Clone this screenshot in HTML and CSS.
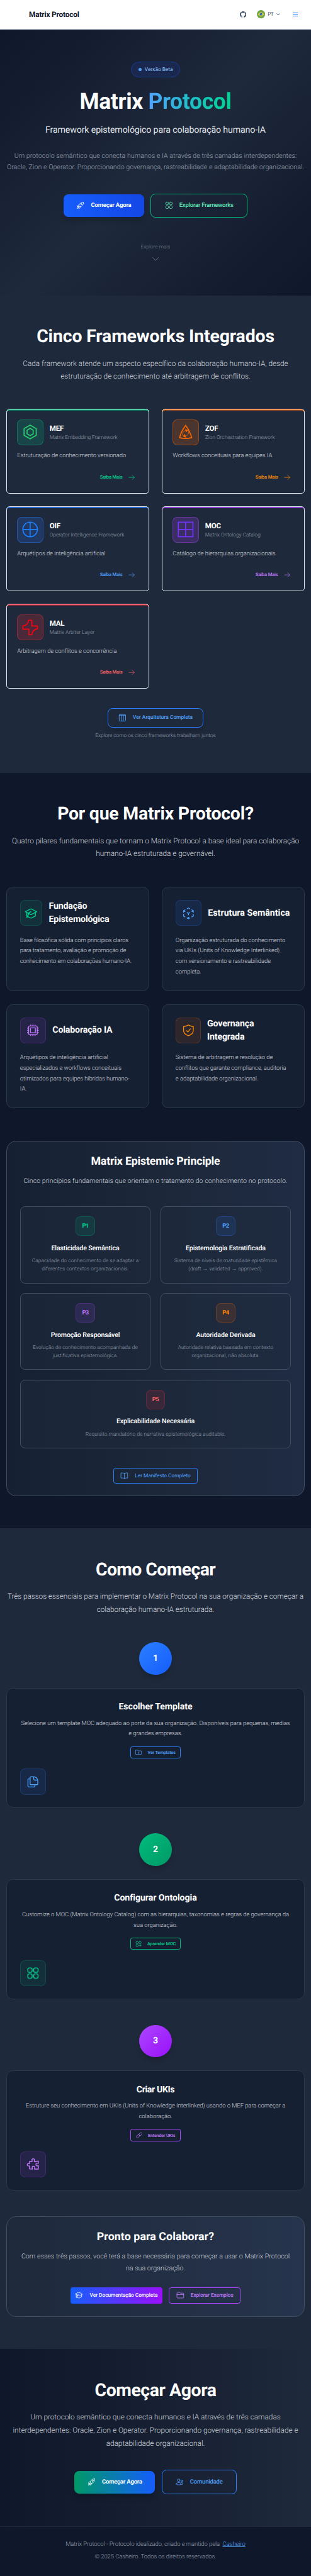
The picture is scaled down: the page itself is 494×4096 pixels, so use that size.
FILE: index.html
```html
<!DOCTYPE html>
<html lang="pt-BR">
<head>
<meta charset="utf-8">
<title>Matrix Protocol</title>
<link rel="stylesheet" href="styles.css">
</head>
<body>
<svg class="sprite" aria-hidden="true">
  <symbol id="rocket" viewBox="0 0 24 24"><path d="M8 13c1-5 5-10 13.5-10.500C22 11 17 15 11.500 16.500zM8.500 11.500c-3-.5-5 1-5.500 5 1.500-.8 3-.7 4.500-.2M12.500 15.500c.5 3-1 5-5 5.700.8-1.500.7-3 .2-4.600M6 16.500c-2.500.5-3.200 2.500-3.500 5 2.500-.2 4.500-1 5-3.500"/><circle cx="15.500" cy="8.500" r="2"/></symbol>
  <symbol id="widgets" viewBox="0 0 24 24"><rect x="2.500" y="2.500" width="8" height="8" rx="2.600"/><rect x="13.500" y="2.500" width="8" height="8" rx="2.600"/><rect x="2.500" y="13.500" width="8" height="8" rx="2.600"/><rect x="13.500" y="13.500" width="8" height="8" rx="2.600"/></symbol>
  <symbol id="widget-add" viewBox="0 0 24 24"><rect x="2.500" y="2.500" width="8" height="8" rx="3"/><rect x="13.500" y="2.500" width="8" height="8" rx="3"/><rect x="2.500" y="13.500" width="8" height="8" rx="3"/><path d="M17.500 12v10M13 17h9"/></symbol>
  <symbol id="arrow" viewBox="0 0 24 24"><path d="M2 12h20M14 4l8 8-8 8"/></symbol>
  <symbol id="down" viewBox="0 0 24 24"><path d="M2 6l10 11L22 6"/></symbol>
  <symbol id="columns" viewBox="0 0 24 24"><rect x="2.500" y="2.500" width="19" height="19" rx="1.500"/><path d="M2.500 5h19M9 5v16M15 5v16"/></symbol>
  <symbol id="cap" viewBox="0 0 24 24"><path d="M12 3.500L22.500 9 12 14.500 1.500 9zM4 10.500v6.500l8 4 8-4v-6.500M12 9c-4 .5-6 3-6 10M4 19.500l3-5"/></symbol>
  <symbol id="cube" viewBox="0 0 24 24"><path d="M9.500 3.500L12 2l2.500 1.500M18.500 5.500L21 7v3M5.500 5.500L3 7v3M3 14v3l2.500 1.500M21 14v3l-2.500 1.500M9.500 20.500L12 22l2.500-1.500M12 22v-2.500M12 15v-3l-2.500-1.500M12 12l2.500-1.500M3 7l2.500 1.500M21 7l-2.500 1.500"/></symbol>
  <symbol id="cpu" viewBox="0 0 24 24"><rect x="4" y="4" width="16" height="16" rx="2"/><rect x="7.500" y="7.500" width="9" height="9"/><path d="M8 4V2M12 4V2M16 4V2M8 22v-2M12 22v-2M16 22v-2M2 8h2M2 12h2M2 16h2M20 8h2M20 12h2M20 16h2"/></symbol>
  <symbol id="shield" viewBox="0 0 24 24"><path d="M12 2c-3 2-6 2.500-9 3.200V12c0 5 4.500 8.500 9 10 4.500-1.500 9-5 9-10V5.200C18 4.500 15 4 12 2zM8.500 12.500l2.500 2.500 4.500-5.500"/></symbol>
  <symbol id="book" viewBox="0 0 24 24"><path d="M12 5.500C9 3.500 5.500 3.500 2 4v15c3.500-.5 7-.5 10 1.500 3-2 6.500-2 10-1.500V4c-3.500-.5-7-.5-10 1.500zM12 5.500v15"/></symbol>
  <symbol id="folder-down" viewBox="0 0 24 24"><path d="M2 4.500h7l2.500 2.500H22v13H2zM12 10.500v6M9.500 14l2.500 2.500 2.500-2.500"/></symbol>
  <symbol id="folder" viewBox="0 0 24 24"><path d="M2 6c0-1.500.5-2.500 2-2.500h5l3 2.500h8c1.500 0 2 .5 2 2v10.500c0 1.500-.5 2-2 2H4c-1.500 0-2-.5-2-2zM2 10.500h20"/></symbol>
  <symbol id="copy" viewBox="0 0 24 24"><path d="M8 2.500h5.500c4 0 7.500 3.500 7.500 7.500v6c0 .8-.4 1.200-1.200 1.200H8c-.8 0-1.200-.4-1.200-1.200V3.700c0-.8.4-1.200 1.200-1.200zM13.500 2.500v4.200c0 1.300.6 2 2 2h5M6.500 6.500H4c-.8 0-1.200.4-1.200 1.200v12.600c0 .8.400 1.200 1.200 1.200h10.500c.8 0 1.200-.4 1.200-1.200v-3"/></symbol>
  <symbol id="link" viewBox="0 0 24 24"><rect x="1" y="12" width="13" height="7.500" rx="3.700" transform="rotate(-45 7.500 15.700)"/><rect x="10" y="4.500" width="13" height="7.500" rx="3.700" transform="rotate(-45 16.500 8.300)"/></symbol>
  <symbol id="puzzle" viewBox="0 0 24 24"><path d="M5.500 7h5V5.500C9 3 11 2 12.500 2S16 3 14.500 5.500V7L22 6v4.500c-3-1.500-4.500 0-4.500 2s1.500 3.500 4.500 2V21h-7v-2c1.500-2-.5-3.200-2-3.200s-3.500 1.200-2 3.200v2l-5.500-.5V15C3 16 1.500 14.500 1.500 12.800S3 9.700 5.500 11z"/></symbol>
  <symbol id="users" viewBox="0 0 24 24"><circle cx="9" cy="7" r="4"/><circle cx="18.500" cy="9" r="2.700"/><path d="M2 18.500c0-3 3-4.500 7-4.500s7 1.500 7 4.500-14 3-14 0zM15 15c3-1.500 7-.5 7 2s-3 3-6 2.500"/></symbol>
</svg>

<header class="topbar">
  <a class="logo">Matrix Protocol</a>
  <nav class="tools">
    <svg class="github" viewBox="0 0 16 16"><path d="M8 0C3.580 0 0 3.580 0 8c0 3.540 2.290 6.530 5.470 7.590.4.070.55-.17.55-.38v-1.490c-2.010.37-2.530-.49-2.690-.94-.09-.23-.48-.94-.82-1.130-.28-.15-.68-.52-.01-.53.63-.01 1.080.58 1.230.82.72 1.210 1.870.87 2.330.66.07-.52.28-.87.51-1.070-1.780-.2-3.640-.89-3.640-3.950 0-.87.31-1.590.82-2.150-.08-.2-.36-1.020.08-2.120 0 0 .67-.21 2.200.82a7.600 7.600 0 0 1 4 0c1.530-1.040 2.200-.82 2.200-.82.44 1.100.16 1.920.08 2.120.51.56.82 1.270.82 2.150 0 3.070-1.870 3.750-3.650 3.950.29.25.54.73.54 1.480v2.200c0 .21.15.46.55.38A8 8 0 0 0 16 8c0-4.420-3.580-8-8-8z"/></svg>
    <svg class="flag" viewBox="0 0 20 20"><circle cx="10" cy="10" r="10" fill="#6da544"/><path d="M10 4.200L18 10l-8 5.800L2 10z" fill="#ffda44"/><circle cx="10" cy="10" r="3.400" fill="#0052b4"/><path d="M7 9.300c2-.4 4.500.2 6 2" stroke="#fff" fill="none"/></svg>
    <span class="lang">PT</span>
    <svg class="caret" viewBox="0 0 9 6"><path d="M.7.7l3.800 4L8.300.7"/></svg>
    <span class="burger"><i></i><i></i><i></i></span>
  </nav>
</header>

<section class="hero">
  <div class="badge"><i></i><span>Versão Beta</span></div>
  <h1>Matrix <span>Protocol</span></h1>
  <p class="tagline">Framework epistemológico para colaboração humano-IA</p>
  <p class="intro">Um protocolo semântico que conecta humanos e IA através de três camadas interdependentes:<br>Oracle, Zion e Operator. Proporcionando governança, rastreabilidade e adaptabilidade organizacional.</p>
  <div class="actions">
    <a class="btn btn-blue"><svg class="ico"><use href="#rocket"/></svg><span>Começar Agora</span></a>
    <a class="btn btn-green-line"><svg class="ico"><use href="#widgets"/></svg><span>Explorar Frameworks</span></a>
  </div>
  <span class="more">Explore mais</span>
  <svg class="ico more-arrow"><use href="#down"/></svg>
</section>

<section class="frameworks">
  <h2 class="h-frameworks">Cinco Frameworks Integrados</h2>
  <p class="lead">Cada framework atende um aspecto específico da colaboração humano-IA, desde<br>estruturação de conhecimento até arbitragem de conflitos.</p>
  <div class="fw-grid">
    <article class="fw green">
      <div class="fw-head"><div class="tile"><svg viewBox="0 0 40 40" class="mark"><path d="M20 3l15 8.500v17L20 37 5 28.500v-17zM20 11l7.500 4.500v9L20 29l-7.500-4.500v-9z"/></svg></div><div><h3>MEF</h3><span class="sub tight">Matrix Embedding Framework</span></div></div>
      <p>Estruturação de conhecimento versionado</p>
      <a class="saiba"><span>Saiba Mais</span><svg class="ico"><use href="#arrow"/></svg></a>
    </article>
    <article class="fw orange">
      <div class="fw-head"><div class="tile"><svg viewBox="0 0 40 40" class="mark"><path d="M20 4c7 9 12 19 15 30-10 2.500-20 2.500-30 0C8 23 13 13 20 4z"/><path class="thin" d="M13 29c-2-6 2-12 8-13M27 18c2 6-2 11-9 12"/><path class="solid" d="M19 12l7 4-5 5zM21 34l-8-3 5-6z"/></svg></div><div><h3>ZOF</h3><span class="sub">Zion Orchestration Framework</span></div></div>
      <p>Workflows conceituais para equipes IA</p>
      <a class="saiba"><span>Saiba Mais</span><svg class="ico"><use href="#arrow"/></svg></a>
    </article>
    <article class="fw blue">
      <div class="fw-head"><div class="tile"><svg viewBox="0 0 40 40" class="mark"><circle cx="20" cy="20" r="18"/><path d="M20 2v36M2 20h36"/></svg></div><div><h3>OIF</h3><span class="sub">Operator Intelligence Framework</span></div></div>
      <p>Arquétipos de inteligência artificial</p>
      <a class="saiba"><span>Saiba Mais</span><svg class="ico"><use href="#arrow"/></svg></a>
    </article>
    <article class="fw purple">
      <div class="fw-head"><div class="tile"><svg viewBox="0 0 40 40" class="mark"><path d="M2 2h36v36H2zM20 2v36M2 20h36"/></svg></div><div><h3>MOC</h3><span class="sub">Matrix Ontology Catalog</span></div></div>
      <p>Catálogo de hierarquias organizacionais</p>
      <a class="saiba"><span>Saiba Mais</span><svg class="ico"><use href="#arrow"/></svg></a>
    </article>
    <article class="fw red">
      <div class="fw-head"><div class="tile"><svg viewBox="0 0 40 40" class="mark"><path d="M16 2h8v14h14v7c-8 1-13 6-14 15h-7V24H2v-8c8-1 13-5 14-14z"/></svg></div><div><h3>MAL</h3><span class="sub">Matrix Arbiter Layer</span></div></div>
      <p>Arbitragem de conflitos e concorrência</p>
      <a class="saiba"><span>Saiba Mais</span><svg class="ico"><use href="#arrow"/></svg></a>
    </article>
  </div>
  <a class="btn btn-arch"><svg class="ico"><use href="#columns"/></svg><span>Ver Arquitetura Completa</span></a>
  <span class="hint">Explore como os cinco frameworks trabalham juntos</span>
</section>

<section class="why">
  <h2 class="h-why">Por que Matrix Protocol?</h2>
  <p class="lead">Quatro pilares fundamentais que tornam o Matrix Protocol a base ideal para colaboração<br>humano-IA estruturada e governável.</p>
  <div class="pillars">
    <article class="pillar green"><div class="pillar-head"><div class="tile w55"><svg class="ico"><use href="#cap"/></svg></div><h3>Fundação<br>Epistemológica</h3></div>
      <p class="p-base">Base filosófica sólida com princípios claros<br>para tratamento, avaliação e promoção de<br>conhecimento em colaborações humano-IA.</p></article>
    <article class="pillar blue"><div class="pillar-head"><div class="tile"><svg class="ico"><use href="#cube"/></svg></div><h3 class="h-struct">Estrutura Semântica</h3></div>
      <p>Organização estruturada do conhecimento<br>via UKIs (Units of Knowledge Interlinked)<br>com versionamento e rastreabilidade<br>completa.</p></article>
    <article class="pillar purple"><div class="pillar-head"><div class="tile"><svg class="ico"><use href="#cpu"/></svg></div><h3>Colaboração IA</h3></div>
      <p>Arquétipos de inteligência artificial<br>especializados e workflows conceituais<br>otimizados para equipes híbridas humano-<br>IA.</p></article>
    <article class="pillar orange"><div class="pillar-head"><div class="tile w62"><svg class="ico"><use href="#shield"/></svg></div><h3>Governança<br>Integrada</h3></div>
      <p>Sistema de arbitragem e resolução de<br>conflitos que garante compliance, auditoria<br>e adaptabilidade organizacional.</p></article>
  </div>
  <div class="panel principles">
    <h3 class="h-mep">Matrix Epistemic Principle</h3>
    <p class="panel-lead">Cinco princípios fundamentais que orientam o tratamento do conhecimento no protocolo.</p>
    <div class="pr-grid">
      <article class="pr green"><b>P1</b><h4>Elasticidade Semântica</h4><p>Capacidade do conhecimento de se adaptar a<br>diferentes contextos organizacionais.</p></article>
      <article class="pr blue"><b>P2</b><h4>Epistemologia Estratificada</h4><p>Sistema de níveis de maturidade epistêmica<br>(draft → validated → approved).</p></article>
      <article class="pr purple"><b>P3</b><h4>Promoção Responsável</h4><p>Evolução de conhecimento acompanhada de<br>justificativa epistemológica.</p></article>
      <article class="pr orange"><b>P4</b><h4>Autoridade Derivada</h4><p>Autoridade relativa baseada em contexto<br>organizacional, não absoluta.</p></article>
      <article class="pr red wide"><b>P5</b><h4>Explicabilidade Necessária</h4><p>Requisito mandatório de narrativa epistemológica auditable.</p></article>
    </div>
    <a class="btn btn-manifesto"><svg class="ico"><use href="#book"/></svg><span>Ler Manifesto Completo</span></a>
  </div>
</section>

<section class="start">
  <h2 class="h-start">Como Começar</h2>
  <p class="lead lead-start">Três passos essenciais para implementar o Matrix Protocol na sua organização e começar a<br>colaboração humano-IA estruturada.</p>
  <div class="steps">
    <div class="step blue"><div class="num">1</div><article><h3>Escolher Template</h3><p>Selecione um template MOC adequado ao porte da sua organização. Disponíveis para pequenas, médias<br>e grandes empresas.</p><a class="mini"><svg class="ico"><use href="#folder-down"/></svg><span>Ver Templates</span></a><div class="tile"><svg class="ico"><use href="#copy"/></svg></div></article></div>
    <div class="step green"><div class="num">2</div><article><h3>Configurar Ontologia</h3><p>Customize o MOC (Matrix Ontology Catalog) com as hierarquias, taxonomias e regras de governança da<br>sua organização.</p><a class="mini"><svg class="ico"><use href="#widget-add"/></svg><span>Aprender MOC</span></a><div class="tile"><svg class="ico"><use href="#widgets"/></svg></div></article></div>
    <div class="step purple"><div class="num">3</div><article><h3 class="h-ukis">Criar UKIs</h3><p>Estruture seu conhecimento em UKIs (Units of Knowledge Interlinked) usando o MEF para começar a<br>colaboração.</p><a class="mini"><svg class="ico"><use href="#link"/></svg><span>Entender UKIs</span></a><div class="tile"><svg class="ico"><use href="#puzzle"/></svg></div></article></div>
  </div>
  <div class="panel ready">
    <h3 class="h-ready">Pronto para Colaborar?</h3>
    <p class="panel-lead">Com esses três passos, você terá a base necessária para começar a usar o Matrix Protocol<br>na sua organização.</p>
    <div class="actions">
      <a class="btn btn-docs"><svg class="ico"><use href="#cap"/></svg><span>Ver Documentação Completa</span></a>
      <a class="btn btn-examples"><svg class="ico"><use href="#folder"/></svg><span>Explorar Exemplos</span></a>
    </div>
  </div>
</section>

<section class="cta">
  <h2 class="h-cta">Começar Agora</h2>
  <p class="lead">Um protocolo semântico que conecta humanos e IA através de três camadas<br>interdependentes: Oracle, Zion e Operator. Proporcionando governança, rastreabilidade e<br>adaptabilidade organizacional.</p>
  <div class="actions">
    <a class="btn btn-go"><svg class="ico"><use href="#rocket"/></svg><span>Começar Agora</span></a>
    <a class="btn btn-community"><svg class="ico"><use href="#users"/></svg><span>Comunidade</span></a>
  </div>
</section>

<footer class="foot">
  <p>Matrix Protocol - Protocolo idealizado, criado e mantido pela <a>Casheiro</a></p>
  <p>© 2025 Casheiro. Todos os direitos reservados.</p>
</footer>
</body>
</html>
```
FILE: styles.css
```css
/* 1rem is one hundred design pixels */
html { font-size: 64.35px; }
* { box-sizing: border-box; margin: 0; padding: 0; }
body {
  font-family: Roboto, "Liberation Sans", sans-serif;
  font-size: .147rem;
  color: #fff;
  background: #0f172a;
  text-rendering: geometricPrecision;
  overflow-x: hidden;
}
.sprite { display: none; }
h1, h2, h3, h4, p, span { white-space: nowrap; }
h1, h2, h3 { font-weight: 700; }
.ico { width: .2rem; height: .2rem; flex: none; fill: none; stroke: currentColor; stroke-width: 1.6; stroke-linecap: round; stroke-linejoin: round; }

.green { --c: #00d492; --line: #00bc7d; --mark: #2ecc71; --rgb: 0, 188, 125; --to: #009966; }
.orange { --c: #ff8904; --line: #ff6900; --mark: #ff6900; --rgb: 255, 105, 0; }
.blue { --c: #51a2ff; --line: #2b7fff; --mark: #1e80ff; --rgb: 43, 127, 255; --to: #155dfc; }
.purple { --c: #c27aff; --line: #ad46ff; --mark: #7433ff; --rgb: 173, 70, 255; --to: #9810fa; }
.red { --c: #ff6467; --line: #fb2c36; --mark: #ff000d; --rgb: 251, 44, 54; }

/* Top bar */
.topbar { height: .73rem; padding: 0 .32rem 0 .715rem; display: flex; align-items: center; justify-content: space-between; background: #fff; border-bottom: 1px solid #e2e8f0; }
.logo { font-size: .184rem; font-weight: 700; letter-spacing: -.013em; color: #0f172b; }
.tools { display: flex; align-items: center; color: #45556c; }
.github { width: .16rem; height: .16rem; fill: #45556c; }
.flag { width: .205rem; height: .205rem; margin-left: .257rem; }
.lang { margin-left: .066rem; width: .125rem; font-size: .128rem; letter-spacing: -.1em; }
.caret { width: .09rem; height: .06rem; margin-left: .095rem; fill: none; stroke: #45556c; stroke-width: 1.5; }
.burger { display: flex; flex-direction: column; gap: .02rem; width: .124rem; margin-left: .315rem; }
.burger i { height: 1px; background: #2b7fff; }
.burger i:nth-child(2) { height: 2px; background: #8ec0ff; }

/* Hero */
.hero {
  height: 6.57rem; padding-top: .8rem; display: flex; flex-direction: column; align-items: center;
  background-image: radial-gradient(circle, rgba(255, 255, 255, .025) .01rem, transparent .015rem), linear-gradient(135deg, #0f172a 0%, #1e293b 50%, #0f172a 100%);
  background-size: .2rem .2rem, 100% 100%;
}
.badge { width: 1.2rem; height: .38rem; border: 1px solid #193a94; border-radius: .2rem; background: #1a274e; color: #8ec5ff; display: flex; align-items: center; justify-content: center; gap: .08rem; font-size: .129rem; }
.badge i { width: .08rem; height: .08rem; border-radius: 50%; background: #51a2ff; }
h1 { margin-top: .29rem; font-size: .552rem; line-height: .6rem; letter-spacing: -.01em; }
h1 span { background: linear-gradient(90deg, #51a2ff, #00bba7 70%, #00d492); background: linear-gradient(90deg, #51a2ff, #1fc0c8 50%, #00d492); -webkit-background-clip: text; background-clip: text; color: transparent; }
.tagline { margin-top: .265rem; font-size: .221rem; line-height: .32rem; letter-spacing: -.011em; color: #e2e5ea; }
.intro { margin-top: .327rem; font-size: .1656rem; line-height: .29rem; letter-spacing: .004em; font-weight: 300; color: #99a1af; text-align: center; }
.actions { display: flex; justify-content: center; align-items: center; gap: .16rem; }
.hero .actions { margin-top: .488rem; }
.more { margin-top: .636rem; font-size: .129rem; line-height: .2rem; font-weight: 300; color: #7b8494; }
.more-arrow { width: .16rem; height: .16rem; margin-top: .104rem; color: #7b8494; stroke-width: 1.8; }

/* Buttons */
.btn { display: flex; align-items: center; justify-content: center; gap: .16rem; border-radius: .12rem; font-size: .147rem; font-weight: 500; letter-spacing: -.017em; }
.btn-blue { width: 1.99rem; height: .56rem; font-weight: 700; background: linear-gradient(90deg, #155dfc, #1447e6); box-shadow: 0 .1rem .15rem -.03rem rgba(0, 0, 0, .2); }
.btn-green-line { width: 2.39rem; height: .6rem; border: .02rem solid #00bc7d; color: #5ee9b5; }
.btn-arch { width: 2.36rem; height: .48rem; margin-top: .47rem; border: .02rem solid #2b7fff; color: #51a2ff; font-size: .129rem; letter-spacing: .004em; box-shadow: 0 .1rem .15rem -.03rem rgba(0, 0, 0, .2); }
.btn-manifesto { width: 2.07rem; height: .38rem; margin: .482rem auto 0; border: 1px solid #2b7fff; border-radius: .06rem; color: #51a2ff; font-size: .129rem; font-weight: 400; letter-spacing: -.002em; }
.btn-docs { width: 2.27rem; height: .4rem; border-radius: .06rem; font-size: .129rem; letter-spacing: -.004em; background: linear-gradient(90deg, #155dfc, #9810fa); }
.btn-examples { width: 1.77rem; height: .4rem; border: .02rem solid #ad46ff; border-radius: .06rem; color: #c27aff; font-size: .129rem; letter-spacing: -.007em; }
.btn-go { width: 1.99rem; height: .56rem; font-weight: 700; background: linear-gradient(90deg, #009966, #155dfc); box-shadow: 0 .1rem .15rem -.03rem rgba(0, 0, 0, .25); }
.btn-community { width: 1.85rem; height: .6rem; border: .02rem solid #2b7fff; color: #51a2ff; }

/* Section headings */
h2 { font-size: .4416rem; line-height: .48rem; text-align: center; }
.lead { margin-top: .26rem; font-size: .184rem; line-height: .32rem; letter-spacing: -.002em; font-weight: 300; color: #d1d5dc; text-align: center; }
.h-frameworks { letter-spacing: -.005em; }
.h-why { letter-spacing: -.008em; }
.h-start { letter-spacing: -.021em; }
.h-cta { letter-spacing: -.015em; }

.tile { width: .64rem; height: .64rem; flex: none; display: flex; align-items: center; justify-content: center; border: 1px solid rgba(var(--rgb), .2); border-radius: .12rem; background: rgba(var(--rgb), .1); color: var(--c); }
.tile .ico { width: .32rem; height: .32rem; }

/* Frameworks */
.frameworks { height: 11.795rem; padding: .78rem .16rem 0; background: #1e293b; display: flex; flex-direction: column; align-items: center; }
.fw-grid { width: 100%; margin-top: .635rem; display: grid; grid-template-columns: 1fr 1fr; gap: .3rem .32rem; }
.fw { height: 2.11rem; padding: .25rem .25rem 0; border: 1px solid #e2e8f0; border-radius: .08rem; box-shadow: inset 0 .025rem 0 var(--line); }
.fw-head { display: flex; align-items: center; gap: .16rem; }
.fw .tile { background: rgba(var(--rgb), .2); border-color: rgba(var(--rgb), .4); }
.mark { width: .4rem; height: .4rem; fill: none; stroke: var(--mark); stroke-width: 2.6; }
.mark .thin { stroke-width: 1.3; }
.mark .solid { fill: var(--mark); stroke: none; }
.fw h3 { font-size: .18rem; line-height: .28rem; letter-spacing: -.02em; }
.sub { display: block; font-size: .129rem; line-height: .2rem; font-weight: 300; letter-spacing: .002em; color: #99a1af; }
.sub.tight { letter-spacing: -.008em; }
.fw p { margin-top: .15rem; font-size: .147rem; line-height: .26rem; font-weight: 300; letter-spacing: -.005em; color: #d1d5dc; }
.saiba { margin-top: .28rem; padding-right: .09rem; height: .2rem; display: flex; align-items: center; justify-content: flex-end; gap: .14rem; color: var(--c); font-size: .118rem; font-weight: 500; letter-spacing: -.02em; }
.saiba .ico { width: .16rem; height: .16rem; }
.hint { margin-top: .116rem; font-size: .129rem; line-height: .2rem; font-weight: 300; color: #99a1af; }

/* Pillars */
.why { height: 18.675rem; padding: .785rem .16rem 0; }
.pillars { margin-top: .653rem; display: grid; grid-template-columns: 1fr 1fr; gap: .325rem .32rem; }
.pillar { height: 2.575rem; padding: .315rem .32rem 0; border: 1px solid #2b394e; border-radius: .16rem; background: #162033; }
.pillar-head { display: flex; align-items: center; gap: .16rem; }
.tile.w55 { width: .55rem; }
.tile.w62 { width: .62rem; }
.pillar h3 { font-size: .2208rem; line-height: .32rem; letter-spacing: -.012em; }
.pillar .h-struct { letter-spacing: .001em; }
.pillar p { margin-top: .235rem; font-size: .147rem; line-height: .26rem; font-weight: 300; letter-spacing: -.005em; color: #d1d5dc; }
.pillar .p-base { letter-spacing: -.015em; }

/* Panels */
.panel { border: 1px solid #414e62; border-radius: .24rem; text-align: center; }
.panel > h3 { font-size: .276rem; line-height: .36rem; }
.panel .h-mep { letter-spacing: -.01em; }
.panel .h-ready { letter-spacing: .005em; }
.panel-lead { margin-top: .155rem; font-size: .1656rem; line-height: .29rem; font-weight: 300; letter-spacing: .003em; color: #d1d5dc; }
.principles { height: 8.78rem; margin-top: .804rem; padding: .32rem .32rem 0; background: linear-gradient(90deg, #162033, #1c2739 50%, #202c44); }
.pr-grid { margin-top: .48rem; display: grid; grid-template-columns: 1fr 1fr; gap: .242rem; }
.pr { height: 1.9rem; padding-top: .235rem; border: 1px solid #414e62; border-radius: .12rem; background: rgba(30, 41, 59, .5); }
.pr.wide { grid-column: 1 / -1; height: 1.7rem; }
.pr b { display: flex; align-items: center; justify-content: center; width: .48rem; height: .48rem; margin: 0 auto; border: 1px solid rgba(var(--rgb), .25); border-radius: .12rem; background: rgba(var(--rgb), .12); color: var(--c); font-size: .147rem; letter-spacing: -.065em; }
.pr h4 { margin-top: .163rem; font-size: .1656rem; line-height: .27rem; font-weight: 500; letter-spacing: -.013em; }
.pr p { margin-top: .09rem; font-size: .129rem; line-height: .2rem; font-weight: 300; letter-spacing: .01em; color: #99a1af; }

/* Steps */
.start { height: 20.278rem; padding: .78rem .16rem 0; background: #1e293b; }
.lead-start { margin-left: -.1rem; margin-right: -.1rem; letter-spacing: -.007em; }
.steps { margin-top: .65rem; display: flex; flex-direction: column; gap: .64rem; }
.num { width: .8rem; height: .8rem; margin: 0 auto .325rem; border-radius: 50%; display: flex; align-items: center; justify-content: center; font-size: .22rem; font-weight: 700; background: linear-gradient(135deg, var(--line), var(--to)); box-shadow: 0 .1rem .15rem -.03rem rgba(0, 0, 0, .2); }
.step article { height: 2.963rem; padding: .305rem .32rem 0; border: 1px solid #2b394e; border-radius: .16rem; background: #162033; display: flex; flex-direction: column; align-items: center; text-align: center; }
.step h3 { font-size: .2208rem; line-height: .32rem; letter-spacing: -.005em; }
.step .h-ukis { letter-spacing: -.027em; }
.step p { margin-top: .12rem; font-size: .147rem; line-height: .26rem; font-weight: 300; letter-spacing: -.004em; color: #d1d5dc; }
.mini { width: 1.25rem; height: .3rem; margin-top: .17rem; display: flex; align-items: center; justify-content: center; gap: .14rem; border: 1px solid var(--line); border-radius: .05rem; color: var(--c); font-size: .11rem; font-weight: 500; letter-spacing: -.016em; }
.mini .ico { width: .16rem; height: .16rem; }
.step .tile { margin-top: .25rem; align-self: flex-start; }
.ready { height: 2.48rem; margin-top: .645rem; padding-top: .325rem; background: linear-gradient(90deg, #1e293b, #26344d); }
.ready .actions { margin-top: .318rem; }

/* Closing call */
.cta { height: 4.38rem; padding-top: .79rem; background: linear-gradient(90deg, #0f172a, #1e293b); }
.cta .lead { margin-top: .244rem; line-height: .326rem; }
.cta .actions { margin-top: .49rem; }

.foot { height: 1.22rem; padding-top: .304rem; border-top: 1px solid #1d293d; background: #0f172a; text-align: center; font-size: .147rem; font-weight: 300; letter-spacing: -.005em; color: #99a1af; }
.foot p { line-height: .26rem; }
.foot p + p { margin-top: .052rem; }
.foot a { margin-left: .035rem; color: #51a2ff; text-decoration: underline; }
```
